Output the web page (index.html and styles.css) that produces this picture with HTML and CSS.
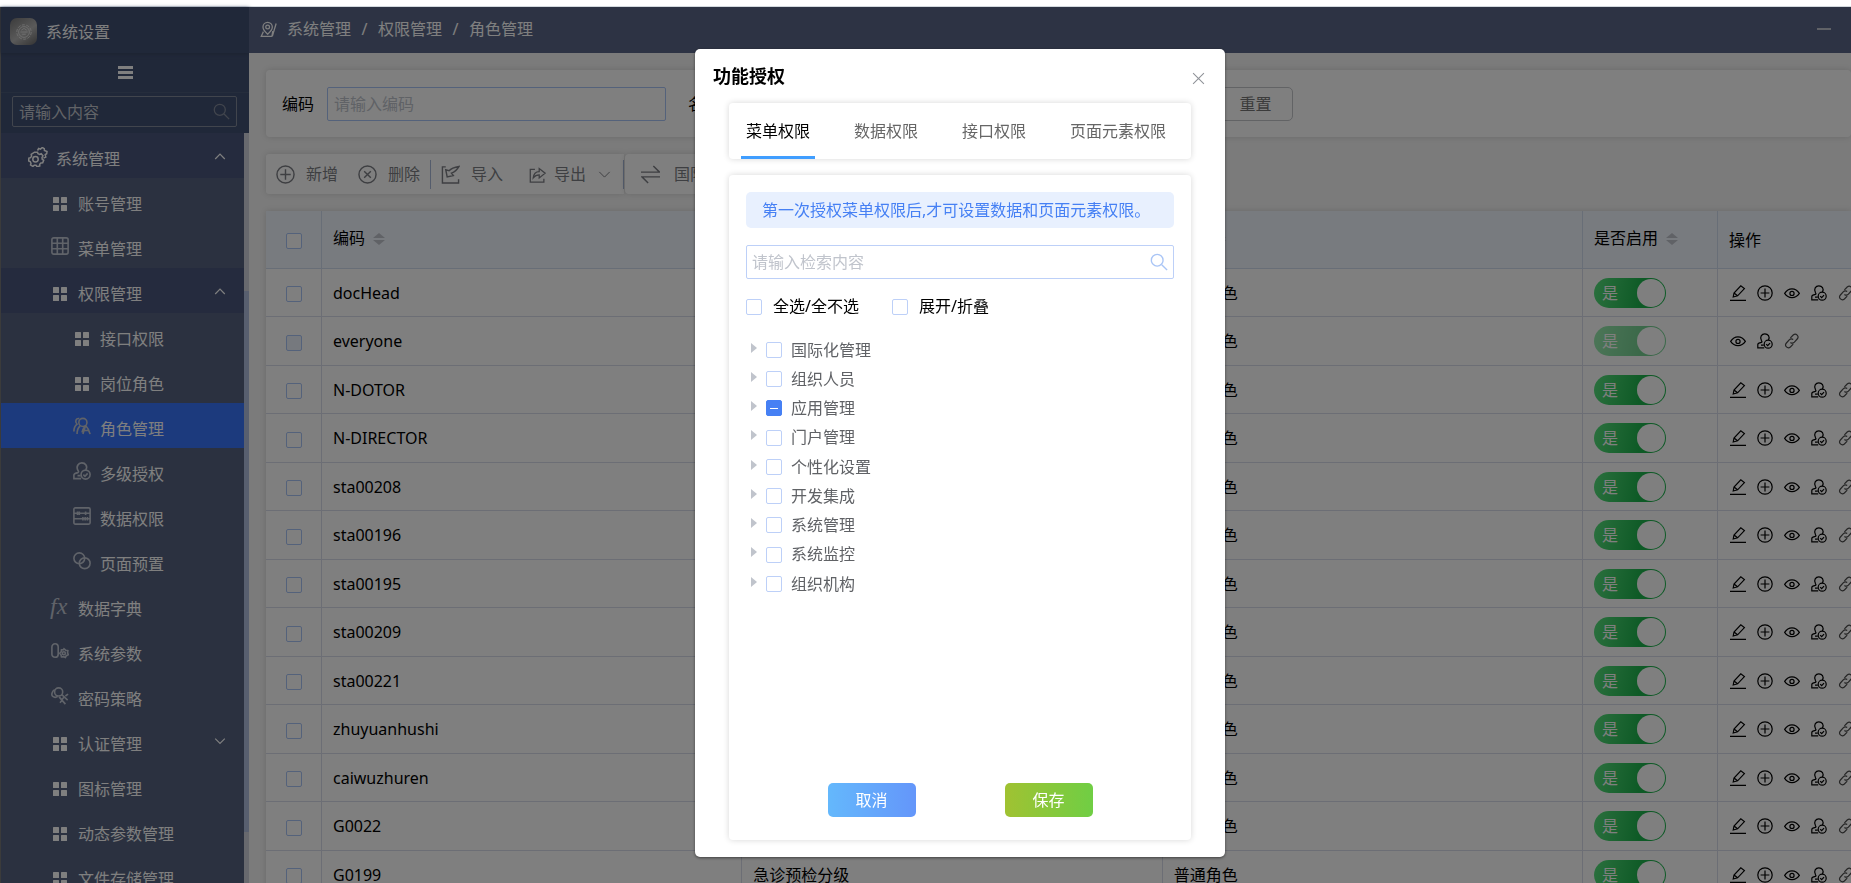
FILE: index.html
```html
<!DOCTYPE html>
<html lang="zh-CN">
<head>
<meta charset="utf-8">
<title>角色管理</title>
<link rel="stylesheet" href="styles.css">
</head>
<body>
<svg class="sprite" aria-hidden="true">
  <symbol id="i-grid" viewBox="0 0 20 20"><g fill="currentColor" stroke="none"><rect x="3" y="3" width="6" height="6" rx="0.5"/><rect x="11" y="3" width="6" height="6" rx="0.5"/><rect x="3" y="11" width="6" height="6" rx="0.5"/><rect x="11" y="11" width="6" height="6" rx="0.5"/></g></symbol>
  <symbol id="i-table" viewBox="0 0 20 20"><rect x="1" y="1" width="18" height="18" rx="2"/><path d="M1 7h18M1 13h18M7 1v18M13 1v18"/></symbol>
  <symbol id="i-gears" viewBox="0 0 20 20"><path d="M6.500 5.200h3l.5 1.600 1.700.7 1.500-.8 1.800 2.200-1 1.500.2 1.800 1.500 1-1 2.600-1.800.1-1.200 1.300.1 1.800-2.800.7-1-1.500H6.300l-1.400 1.200-2.400-1.500.5-1.700-.8-1.600-1.600-.7.3-2.800 1.700-.4 1-1.500-.4-1.800z"/><circle cx="7.500" cy="12.200" r="2.700"/><path d="M9.500 3.500l1.200-2 1.800.6 1.800-1.600 2 1.200.1 1.800 2.600 1-.3 2.200-1.500 1 .6 2.300-2.300 1.200"/></symbol>
  <symbol id="i-role" viewBox="0 0 20 20"><circle cx="11" cy="6" r="4.500"/><path d="M7 1.800C3.500 1 1.500 5 4.500 8 2.500 9.500 1 12 1 16M8 10c-2.500 2-3.500 5-3.500 9M13.500 10c-1.500 2-3 4-3.500 7M14 9.500l-3 9.500M14 9.500c2 2 3.500 4 5 9.500M12.500 15h5"/></symbol>
  <symbol id="i-auth" viewBox="0 0 20 20"><path d="M9 18.500H1v-4c0-1.800 2-2.200 4.500-2.700 1-.5.800-1.200.2-2C2.800 5 6 1 9.800 1s7 3.500 4.400 7.800M5 15.200h3.500"/><circle cx="14" cy="14" r="5"/><path d="M11.500 14l1.800 1.800 3-3.200"/></symbol>
  <symbol id="i-data" viewBox="0 0 20 20"><rect x="1" y="1" width="18" height="18" rx="1.500"/><path d="M1 7h18M1 13h18M5 5v4M7 5v4M14 5v4M11 11v4M13.500 11v4M16 11v4"/></symbol>
  <symbol id="i-rings" viewBox="0 0 20 20"><circle cx="7" cy="7" r="6"/><circle cx="13" cy="12.500" r="6"/></symbol>
  <symbol id="i-param" viewBox="0 0 20 20"><rect x="1" y="2" width="7" height="15" rx="3.500"/><path d="M14.500 7.500l1.800 1.600 2.400.4-.3 2.500.8 2-2.200 1.200-1 2-2-.9-2.400.3-.5-2.300-1.400-1.800 1.600-1.500.3-2.300 2.200-.1z"/><circle cx="14.300" cy="12.500" r="1.700"/></symbol>
  <symbol id="i-key" viewBox="0 0 20 20"><circle cx="8.500" cy="5.500" r="4.500"/><path d="M4 3c-3 2-4 6-2 7.500s4 1 5.500 0M12 8.500l6.500 6M16 10l3-2M9 11l7 8M12 15l-2 2.500M14.500 11l-2.500 3.500"/></symbol>
  <symbol id="i-pin" viewBox="0 0 20 20"><path d="M9 15.500C5 12 3.500 9.500 3.500 7a5.500 5.500 0 0 1 11 0c0 2.500-1.500 5-5.500 8.500z"/><circle cx="9" cy="7" r="2.200"/><path d="M4 12.500L1.500 18H14M15 12l-1 6M19 3l-4.500 15"/></symbol>
  <symbol id="i-search" viewBox="0 0 20 20"><circle cx="8" cy="8" r="6.500"/><path d="M13 13l6 6"/></symbol>
  <symbol id="i-up" viewBox="0 0 20 20"><path d="M2 15l8-8 8 8"/></symbol>
  <symbol id="i-down" viewBox="0 0 20 20"><path d="M2 6l8 8 8-8"/></symbol>
  <symbol id="i-plus" viewBox="0 0 20 20"><circle cx="10" cy="10" r="9"/><path d="M10 4.500v11M4.500 10h11"/></symbol>
  <symbol id="i-cross" viewBox="0 0 20 20"><circle cx="10" cy="10" r="9"/><path d="M6.500 6.500l7 7M13.500 6.500l-7 7"/></symbol>
  <symbol id="i-import" viewBox="0 0 20 20"><path d="M5 2H1.500v17h17v-4M5 5l1.500 7.500 6.500-1.500-2-2.500C14 7.500 17 5 19 1.500 15.500 2 11 3 8.500 6z"/></symbol>
  <symbol id="i-export" viewBox="0 0 20 20"><path d="M7 4H1.500v15h16v-4M5 14c.5-5 3-7.500 7-7.500V3l7 5.500-7 5.500v-3.500c-3 0-5 1-7 3.500z"/></symbol>
  <symbol id="i-swap" viewBox="0 0 20 20"><path d="M0 7.500h19.500L13 1M20 12.500H1L7.500 19"/></symbol>
  <symbol id="i-edit" viewBox="0 0 20 20"><path d="M0 19.200h20M4 15l1-5L13.500 1l4.500 3.500-8.500 9zM5 10l4.500 3.500"/></symbol>
  <symbol id="i-eye" viewBox="0 0 20 20"><path d="M.8 10.500C5.500 2.800 14.500 2.800 19.200 10.500 14.500 17.500 5.500 17.500.8 10.500z"/><circle cx="10" cy="10.500" r="2.600"/></symbol>
  <symbol id="i-link" viewBox="0 0 20 20"><path d="M8 6l3.500-3.500c3.500-3 8 1.500 5 5L13 11.500c-1.500 1.500-3.500 1.500-5 .3M11.500 14L8 17.500c-3.500 3-8-1.500-5-5L6.500 8.500c1.500-1.500 3.500-1.500 5-.3"/></symbol>
  <symbol id="i-logo" viewBox="0 0 20 20"><circle cx="10" cy="10" r="8" stroke-dasharray="3.500 1.500"/><circle cx="10" cy="10" r="6"/><path d="M7 8l3-2 3 2M6 10h8M8 12.500h4"/></symbol>
</svg>

<div class="strip"></div>
<div class="shell">
  <aside class="side">
    <div class="brand"><span class="logo"><svg><use href="#i-logo"/></svg></span>系统设置</div>
    <button class="burger" aria-label="收起菜单"><span></span><span></span><span></span></button>
    <label class="side-search"><input type="text" placeholder="请输入内容" aria-label="搜索菜单"><svg class="ico"><use href="#i-search"/></svg></label>
    <div class="nav-wrap">
      <nav class="nav">
        <a class="item open l1" href="#"><svg class="ico"><use href="#i-gears"/></svg>系统管理<svg class="chev"><use href="#i-up"/></svg></a>
        <a class="item l2" href="#"><svg class="ico"><use href="#i-grid"/></svg>账号管理</a>
        <a class="item l2" href="#"><svg class="ico thin"><use href="#i-table"/></svg>菜单管理</a>
        <a class="item open l2" href="#"><svg class="ico"><use href="#i-grid"/></svg>权限管理<svg class="chev"><use href="#i-up"/></svg></a>
        <a class="item l3" href="#"><svg class="ico"><use href="#i-grid"/></svg>接口权限</a>
        <a class="item l3" href="#"><svg class="ico"><use href="#i-grid"/></svg>岗位角色</a>
        <a class="item l3 active" href="#"><svg class="ico thin"><use href="#i-role"/></svg>角色管理</a>
        <a class="item l3" href="#"><svg class="ico thin"><use href="#i-auth"/></svg>多级授权</a>
        <a class="item l3" href="#"><svg class="ico thin"><use href="#i-data"/></svg>数据权限</a>
        <a class="item l3" href="#"><svg class="ico thin"><use href="#i-rings"/></svg>页面预置</a>
        <a class="item l2" href="#"><span class="ico thin fx">fx</span>数据字典</a>
        <a class="item l2" href="#"><svg class="ico thin"><use href="#i-param"/></svg>系统参数</a>
        <a class="item l2" href="#"><svg class="ico thin"><use href="#i-key"/></svg>密码策略</a>
        <a class="item l2" href="#"><svg class="ico"><use href="#i-grid"/></svg>认证管理<svg class="chev"><use href="#i-down"/></svg></a>
        <a class="item l2" href="#"><svg class="ico"><use href="#i-grid"/></svg>图标管理</a>
        <a class="item l2" href="#"><svg class="ico"><use href="#i-grid"/></svg>动态参数管理</a>
        <a class="item l2" href="#"><svg class="ico"><use href="#i-grid"/></svg>文件存储管理</a>
      </nav>
      <div class="scroll"><div class="thumb"></div></div>
    </div>
  </aside>

  <main class="main">
    <header class="head">
      <svg class="ico"><use href="#i-pin"/></svg>
      <a href="#">系统管理</a><i>/</i><a href="#">权限管理</a><i>/</i><a href="#">角色管理</a>
      <button class="min" aria-label="最小化"></button>
    </header>
    <div class="content">
      <form class="card filter">
        <label for="f-code">编码</label><input id="f-code" type="text" placeholder="请输入编码">
        <label for="f-name">名称</label><input id="f-name" type="text">
        <button type="button" class="btn-plain">重置</button>
      </form>
      <div class="tools">
        <div class="card group">
          <button class="tool"><svg><use href="#i-plus"/></svg>新增</button>
          <button class="tool"><svg><use href="#i-cross"/></svg>删除</button>
          <span class="bar"></span>
          <button class="tool imp"><svg><use href="#i-import"/></svg>导入</button>
          <button class="tool exp"><svg><use href="#i-export"/></svg>导出<svg class="drop"><use href="#i-down"/></svg></button>
          <span class="bar"></span>
        </div>
        <div class="card group second">
          <button class="tool"><svg><use href="#i-swap"/></svg>国际化</button>
        </div>
      </div>
      <table class="grid">
        <colgroup><col class="c-check"><col><col><col><col class="c-on"><col class="c-act"></colgroup>
        <thead><tr>
          <th class="mid"><input type="checkbox" class="box" aria-label="全选"></th>
          <th>编码<span class="sort"></span></th><th>名称<span class="sort"></span></th><th>类型<span class="sort"></span></th>
          <th>是否启用<span class="sort"></span></th><th class="op">操作</th>
        </tr></thead>
        <tbody id="rows"></tbody>
      </table>
    </div>
  </main>
</div>

<div class="mask">
  <section class="dialog" role="dialog" aria-labelledby="dlg-title">
    <div class="dlg-head"><h2 id="dlg-title">功能授权</h2><button class="close" aria-label="关闭"><svg viewBox="0 0 12 12"><path d="M1 1l10 10M11 1L1 11"/></svg></button></div>
    <div class="tabs" role="tablist">
      <button role="tab" class="tab on" aria-selected="true">菜单权限</button>
      <button role="tab" class="tab">数据权限</button>
      <button role="tab" class="tab">接口权限</button>
      <button role="tab" class="tab">页面元素权限</button>
    </div>
    <div class="panel">
      <p class="notice">第一次授权菜单权限后,才可设置数据和页面元素权限。</p>
      <label class="find"><input type="text" placeholder="请输入检索内容" aria-label="检索"><svg><use href="#i-search"/></svg></label>
      <div class="opts">
        <label><input type="checkbox" class="box">全选/全不选</label>
        <label><input type="checkbox" class="box">展开/折叠</label>
      </div>
      <ul class="tree">
        <li><span class="caret"></span><label><input type="checkbox" class="box">国际化管理</label></li>
        <li><span class="caret"></span><label><input type="checkbox" class="box">组织人员</label></li>
        <li><span class="caret"></span><label><input type="checkbox" class="box part">应用管理</label></li>
        <li><span class="caret"></span><label><input type="checkbox" class="box">门户管理</label></li>
        <li><span class="caret"></span><label><input type="checkbox" class="box">个性化设置</label></li>
        <li><span class="caret"></span><label><input type="checkbox" class="box">开发集成</label></li>
        <li><span class="caret"></span><label><input type="checkbox" class="box">系统管理</label></li>
        <li><span class="caret"></span><label><input type="checkbox" class="box">系统监控</label></li>
        <li><span class="caret"></span><label><input type="checkbox" class="box">组织机构</label></li>
      </ul>
      <div class="foot"><button class="btn cancel">取消</button><button class="btn save">保存</button></div>
    </div>
  </section>
</div>
<script src="app.js"></script>
</body>
</html>
```
FILE: styles.css
```css
* { box-sizing: border-box; }
html, body { height: 100%; }
body {
  margin: 0;
  display: flex;
  flex-direction: column;
  overflow: hidden;
  background: #fff;
  color: #000;
  font: 16px/24px "Noto Sans", "Noto Sans CJK SC", sans-serif;
}
button, input { font: inherit; color: inherit; }
button { border: 0; padding: 0; background: none; cursor: pointer; }
a { color: inherit; text-decoration: none; }
svg { fill: none; stroke: currentColor; stroke-width: 1.5; flex: none; }
.sprite { position: absolute; width: 0; height: 0; }
.strip { height: 7px; flex: none; border-bottom: 1px solid #d3d9de; }
.shell { flex: 1; min-height: 0; display: flex; border-left: 1px solid #777; }

/* sidebar */
.side { width: 248px; flex: none; display: flex; flex-direction: column; background: #415072; color: #fff; }
.brand { height: 46px; flex: none; display: flex; align-items: center; gap: 9px; padding: 3px 0 0 9px; box-shadow: 0 1px 4px #36435e; }
.logo { width: 27px; height: 27px; border-radius: 7px; display: flex; align-items: center; justify-content: center; background: linear-gradient(145deg, #777, #b4b4b4 55%, #666); color: #e0e0e0; }
.logo svg { width: 18px; height: 18px; stroke-width: 1; }
.burger { height: 40px; flex: none; display: flex; flex-direction: column; align-items: center; justify-content: center; gap: 2px; border-bottom: 1px solid #4b5b78; }
.burger span { width: 15px; height: 3px; background: #fff; }
.side-search { height: 31px; flex: none; margin: 3px 12px 6px 11px; display: flex; align-items: center; border: 1px solid #838b9b; border-radius: 2px; padding: 0 6px; }
.side-search input { flex: 1; min-width: 0; border: 0; padding: 0; background: none; outline: 0; }
.side-search input::placeholder { color: #c3c7cf; opacity: 1; }
.side-search .ico { width: 17px; height: 17px; color: #838b9b; }
.nav-wrap { flex: 1; min-height: 0; display: flex; background: #566280; }
.nav { flex: 1; overflow: hidden; }
.item { height: 45px; display: flex; align-items: center; gap: 8px; padding-top: 6px; padding-right: 18px; }
.item .ico { width: 20px; height: 20px; }
.item .thin { margin-bottom: 6px; padding: 1px; color: #c0c6d2; stroke-width: 1.8; }
.item .fx { padding: 0; font: italic 24px/20px "Liberation Serif", serif; }
.l1 { padding-left: 27px; }
.l1 .ico { margin-bottom: 4px; }
.l2 { padding-left: 49px; }
.l3 { padding-left: 71px; }
.open { background: #4a567c; }
.active { background: #3874fa; }
.chev { width: 12px; height: 12px; margin: 0 0 6px auto; stroke-width: 2; }
.scroll { width: 5px; padding-top: 158px; background: #d0d2dc; }
.thumb { height: 541px; background: #b0bede; }

/* page */
.main { flex: 1; min-width: 0; display: flex; flex-direction: column; background: #f6f6f6; }
.head { height: 46px; flex: none; display: flex; align-items: center; gap: 10px; padding: 0 20px 2px 11px; background: #5b6788; color: #fff; }
.head .ico { width: 17px; height: 17px; }
.head i { width: 7px; text-align: center; font-style: normal; }
.min { width: 14px; height: 2px; margin-left: auto; background: #c0c4cf; }
.content { padding: 17px 0 0 17px; display: flex; flex-direction: column; gap: 17px; }
.card { background: #fff; border-radius: 4px; box-shadow: 0 0 6px rgba(0, 0, 0, .14); }
.filter { height: 67px; display: flex; align-items: center; padding-left: 16px; }
.filter input { width: 339px; height: 34px; margin: 0 22px 0 13px; padding: 0 6px; border: 1px solid #a9c5f6; border-radius: 2px; background: #fff; }
.filter input::placeholder { color: #c0c4cc; opacity: 1; }
.btn-plain { width: 75px; height: 34px; margin-left: 124px; border: 1px solid #c4c6ca; border-radius: 5px; color: #777; }
.tools { display: flex; gap: 1px; }
.group { height: 40px; display: flex; align-items: center; border-radius: 3px 0 0 3px; color: #7c7e84; }
.tool { display: flex; align-items: center; gap: 11px; padding: 0 10px; height: 40px; }
.tool svg { width: 19px; height: 19px; }
.bar { width: 1px; height: 29px; background: #a9b8d8; }
.tool.imp { padding-right: 26px; }
.tool.exp { gap: 8px; padding-left: 0; padding-right: 12px; }
.tool.exp svg { width: 17px; height: 17px; }
.tool.exp .drop { width: 13px; height: 13px; margin-left: 4px; }
.second { border-radius: 4px; padding: 0 6px; }
.second .tool { gap: 14px; }
.grid { width: 100%; table-layout: fixed; border-collapse: separate; border-spacing: 0; background: #fff; box-shadow: 0 0 6px rgba(0, 0, 0, .14); }
.c-check { width: 56px; }
.c-on { width: 135px; }
.c-act { width: 133px; }
.grid th, .grid td { padding: 0 11px; border-right: 1px solid #d9dcea; border-bottom: 1px solid #d9dcea; text-align: left; font-weight: 400; white-space: nowrap; overflow: hidden; }
.grid th { height: 58px; padding-bottom: 4px; background: #f0f6ff; border-color: #d0dcee; }
.grid th.op { padding-bottom: 0; }
.grid tr > :last-child { border-right: 0; }
.grid td { height: 49px; }
.grid tbody tr:nth-child(odd) td { height: 48px; }
.grid .mid { text-align: center; padding: 0; }
.sort { display: inline-grid; gap: 2px; margin-left: 8px; vertical-align: middle; }
.sort::before, .sort::after { content: ""; border: 6px solid transparent; border-top-width: 0; border-bottom: 5px solid #c0c4cc; }
.sort::after { border-top: 5px solid #c0c4cc; border-bottom: 0; }
.box { appearance: none; width: 16px; height: 16px; margin: 0; flex: none; border: 1px solid #bdd0f8; border-radius: 2px; background: #fff; vertical-align: middle; }
.grid .box { border-color: #a9c5f6; }
.box:disabled { background: #edf2fc; }
.part { display: grid; place-items: center; background: #4680f4; border-color: #4680f4; }
.part::before { content: ""; width: 8px; height: 1px; background: #fff; }
.switch { display: block; position: relative; width: 72px; height: 30px; }
.switch input { position: absolute; inset: 0; width: 100%; height: 100%; margin: 0; opacity: 0; }
.track { display: flex; align-items: center; justify-content: space-between; height: 30px; padding: 0 1px 0 8px; border-radius: 15px; background: linear-gradient(100deg, #56e07c, #1cb44c 65%); color: #fff; }
.track::after { content: ""; width: 28px; height: 28px; border-radius: 50%; background: #fff; }
.switch input:disabled + .track { opacity: .6; }
.acts { display: flex; gap: 11px; padding-left: 1px; }
.acts button { height: 16px; width: 16px; flex: none; display: flex; }
.acts svg { width: 16px; height: 16px; }
.acts .link { opacity: .7; }

/* dialog */
.mask { position: fixed; inset: 7px 0 0; display: flex; justify-content: center; padding: 42px 0 26px 69px; background: rgba(0, 0, 0, .5); }
.dialog { width: 530px; display: flex; flex-direction: column; padding: 0 34px 17px; border-radius: 5px; background: #fff; box-shadow: 0 1px 3px rgba(0, 0, 0, .5); }
.dlg-head { height: 54px; flex: none; display: flex; align-items: center; justify-content: space-between; margin: 0 -14px 0 -16px; }
h2 { margin: 0; font-size: 18px; line-height: 24px; font-weight: 700; }
.close { padding: 5px 0 0; color: #909399; }
.close svg { display: block; width: 13px; height: 13px; stroke-width: 1; }
.tabs { height: 56px; flex: none; display: flex; gap: 34px; padding: 0 12px; border-radius: 4px; box-shadow: 0 0 6px rgba(0, 0, 0, .16); color: #666; }
.tab { padding: 2px 5px 0; border-bottom: 3px solid transparent; white-space: nowrap; }
.tab.on { color: #000; border-color: #409eff; }
.panel { flex: 1; min-height: 0; display: flex; flex-direction: column; margin-top: 16px; padding: 17px 17px 23px; border-radius: 4px; box-shadow: 0 0 6px rgba(0, 0, 0, .16); }
.notice { margin: 0 0 17px; padding: 6px 16px; border-radius: 5px; background: #e8f0fe; color: #4680f4; white-space: nowrap; }
.find { height: 34px; flex: none; display: flex; align-items: center; padding: 0 5px; border: 1px solid #bdd0f8; border-radius: 2px; }
.find input { flex: 1; min-width: 0; border: 0; padding: 0; outline: 0; }
.find input::placeholder { color: #c0c4cc; opacity: 1; }
.find svg { width: 18px; height: 18px; color: #a9c5f6; }
.opts { display: flex; gap: 33px; padding-top: 15px; }
.opts label { display: flex; align-items: center; gap: 11px; }
.opts .box, .tree .box { margin-top: 1px; }
.tree { flex: 1; list-style: none; margin: 0; padding: 17px 0 0 5px; color: #606266; }
.tree li { height: 29px; display: flex; align-items: center; }
.tree li:nth-child(4n) { height: 30px; }
.tree label { display: flex; align-items: center; gap: 9px; }
.caret { width: 15px; margin-bottom: 4px; }
.caret::before { content: ""; display: block; width: 0; border: 5px solid transparent; border-right-width: 0; border-left: 6px solid #c0c4cc; }
.foot { display: flex; justify-content: center; gap: 89px; }
.btn { width: 88px; height: 34px; border-radius: 5px; color: #fff; }
.cancel { background: linear-gradient(90deg, #64b8fc, #6496fa); }
.save { background: linear-gradient(90deg, #a0c232, #70ce44); }
```
FILE: app.js
```js
const codes = ["docHead", "everyone", "N-DOTOR", "N-DIRECTOR", "sta00208", "sta00196", "sta00195",
  "sta00209", "sta00221", "zhuyuanhushi", "caiwuzhuren", "G0022", "G0199"];
const names = { G0199: "急诊预检分级" };
const actions = [["edit", "编辑"], ["plus", "新增"], ["eye", "查看"], ["auth", "授权"], ["link", "关联"]];

document.getElementById("rows").innerHTML = codes.map(code => {
  const locked = code === "everyone";
  const off = locked ? " disabled" : "";
  const list = locked ? actions.slice(2) : actions;
  return `<tr>
    <td class="mid"><input type="checkbox" class="box" aria-label="${code}"${off}></td>
    <td>${code}</td><td>${names[code] || ""}</td><td>普通角色</td>
    <td><label class="switch"><input type="checkbox" role="switch" checked${off}><span class="track">是</span></label></td>
    <td><div class="acts">${list.map(([id, label]) =>
      `<button class="${id}" aria-label="${label}"><svg><use href="#i-${id}"/></svg></button>`).join("")}</div></td>
  </tr>`;
}).join("");
```
